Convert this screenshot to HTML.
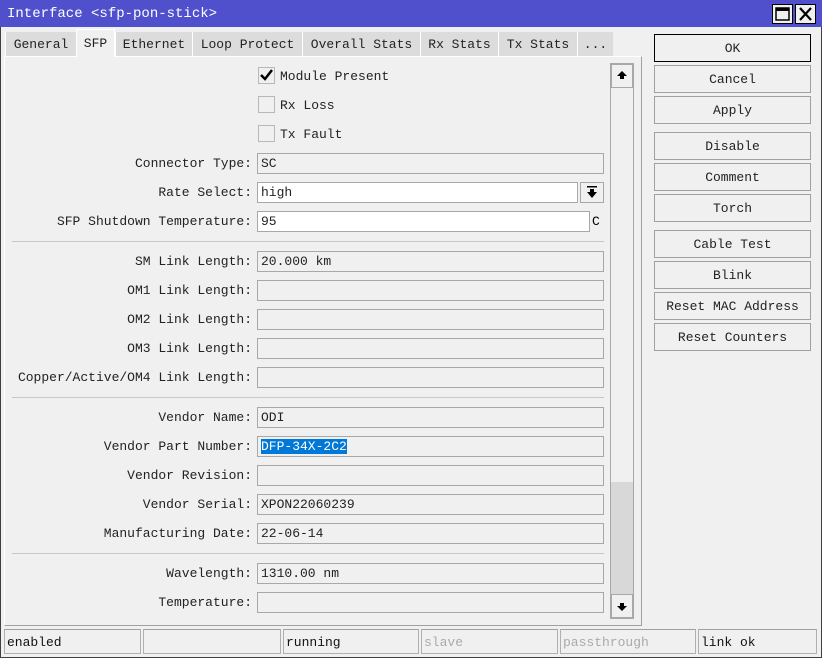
<!DOCTYPE html>
<html><head><meta charset="utf-8"><style>
*{margin:0;padding:0;box-sizing:border-box}
body{width:822px;height:658px;background:#f0f0f0;font-family:"Liberation Mono","Noto Sans CJK SC",monospace;font-size:13px;color:#000;position:relative;overflow:hidden}
.a{position:absolute}
#win{left:0;top:0;width:822px;height:658px;border:1px solid #404040;border-top:none}
#title{left:0;top:0;width:822px;height:27px;background:#5050cc;color:#fff;font-size:14px;padding:6px 0 0 7px}
.tb{top:4px;width:21px;height:20px;background:#f0f0f0;border:1px solid #000}
.tab{top:32px;height:24px;background:#dcdcdc;border-left:1px solid #fff;text-align:center;line-height:26px;color:#222}
.tab.sel{top:29px;height:28px;background:#f0f0f0;border:1px solid #fff;border-bottom:none;line-height:27px}
#panel{left:4px;top:56px;width:638px;height:570px;border:1px solid #fff;border-right-color:#a0a0a0;border-bottom-color:#a0a0a0}
.lbl{right:570px;width:260px;text-align:right;color:#222;margin-top:1px}
.in{left:257px;width:347px;height:21px;border:1px solid #a8a8a8;background:#f0f0f0;padding-left:3px;line-height:20px;color:#222}
.sep{left:12px;width:592px;height:1px;background:#c8c8c8}
.cb{left:258px;width:17px;height:17px;border:1px solid #b8b8b8;background:#f0f0f0}
.cbl{left:280px;color:#222;margin-top:1px}
.btn{left:654px;width:157px;height:28px;border:1px solid #a0a0a0;background:#f0f0f0;text-align:center;line-height:27px;color:#222}
.st{top:629px;height:25px;border:1px solid #b0b0b0;border-top-color:#a0a0a0;padding-left:2px;line-height:25px;color:#111}
</style></head><body>
<div class="a" id="win"></div>
<div class="a" id="title">Interface &lt;sfp-pon-stick&gt;</div>
<div class="a tb" style="left:772px"><svg width="19" height="18" style="position:absolute;left:0;top:0"><rect x="3" y="3" width="13" height="12" fill="none" stroke="#000" stroke-width="1.5"/><rect x="3" y="3" width="13" height="3" fill="#000"/></svg></div>
<div class="a tb" style="left:795px"><svg width="19" height="18" style="position:absolute;left:0;top:0"><path d="M4 3L15 15M15 3L4 15" stroke="#000" stroke-width="2.2"/></svg></div>

<div class="a tab" style="left:5px;width:71px">General</div>
<div class="a tab" style="left:115px;width:77px">Ethernet</div>
<div class="a tab" style="left:192px;width:110px">Loop Protect</div>
<div class="a tab" style="left:302px;width:118px">Overall Stats</div>
<div class="a tab" style="left:420px;width:78px">Rx Stats</div>
<div class="a tab" style="left:498px;width:79px">Tx Stats</div>
<div class="a tab" style="left:577px;width:36px">...</div>
<div class="a" id="panel"></div>
<div class="a tab sel" style="left:76px;width:39px">SFP</div>

<div class="a cb" style="top:67px"><svg width="15" height="15" style="position:absolute;left:0;top:0"><path d="M2 7L6 11L13 2" fill="none" stroke="#000" stroke-width="2.5"/></svg></div><div class="a cbl" style="top:68px">Module Present</div>
<div class="a cb" style="top:96px"></div><div class="a cbl" style="top:97px">Rx Loss</div>
<div class="a cb" style="top:125px"></div><div class="a cbl" style="top:126px">Tx Fault</div>

<div class="a lbl" style="top:155px">Connector Type:</div><div class="a in" style="top:153px">SC</div>
<div class="a lbl" style="top:184px">Rate Select:</div><div class="a in" style="top:182px;width:321px;background:#fff">high</div>
<div class="a" style="left:580px;top:182px;width:24px;height:21px;border:1px solid #a8a8a8"><svg width="22" height="19" style="position:absolute;left:0;top:0"><rect x="6" y="3" width="10" height="1.5" fill="#000"/><path d="M6 9H16L11 15Z" fill="#000"/><rect x="9" y="6" width="4" height="4" fill="#000"/></svg></div>
<div class="a lbl" style="top:213px">SFP Shutdown Temperature:</div><div class="a in" style="top:211px;width:333px;background:#fff">95</div>
<div class="a" style="left:592px;top:214px">C</div>
<div class="a sep" style="top:241px"></div>

<div class="a lbl" style="top:253px">SM Link Length:</div><div class="a in" style="top:251px">20.000 km</div>
<div class="a lbl" style="top:282px">OM1 Link Length:</div><div class="a in" style="top:280px"></div>
<div class="a lbl" style="top:311px">OM2 Link Length:</div><div class="a in" style="top:309px"></div>
<div class="a lbl" style="top:340px">OM3 Link Length:</div><div class="a in" style="top:338px"></div>
<div class="a lbl" style="top:369px">Copper/Active/OM4 Link Length:</div><div class="a in" style="top:367px"></div>
<div class="a sep" style="top:397px"></div>

<div class="a lbl" style="top:409px">Vendor Name:</div><div class="a in" style="top:407px">ODI</div>
<div class="a lbl" style="top:438px">Vendor Part Number:</div><div class="a in" style="top:436px"><span style="background:#0078d7;color:#fff">DFP-34X-2C2</span></div>
<div class="a lbl" style="top:467px">Vendor Revision:</div><div class="a in" style="top:465px"></div>
<div class="a lbl" style="top:496px">Vendor Serial:</div><div class="a in" style="top:494px">XPON22060239</div>
<div class="a lbl" style="top:525px">Manufacturing Date:</div><div class="a in" style="top:523px">22-06-14</div>
<div class="a sep" style="top:553px"></div>
<div class="a lbl" style="top:565px">Wavelength:</div><div class="a in" style="top:563px">1310.00 nm</div>
<div class="a lbl" style="top:594px">Temperature:</div><div class="a in" style="top:592px"></div>

<!-- scrollbar -->
<div class="a" style="left:610px;top:63px;width:24px;height:556px;border:1px solid #a8a8a8;background:#f0f0f0"></div>
<div class="a" style="left:611px;top:482px;width:22px;height:113px;background:#d8d8d8"></div>
<div class="a" style="left:611px;top:64px;width:22px;height:24px;border:1px solid #a8a8a8"><svg width="20" height="22" style="position:absolute;left:0;top:0"><path d="M5 11H15L10 6Z" fill="#000"/><rect x="8" y="10" width="4" height="4" fill="#000"/></svg></div>
<div class="a" style="left:611px;top:594px;width:22px;height:24px;border:1px solid #a8a8a8"><svg width="20" height="22" style="position:absolute;left:0;top:0"><path d="M5 11H15L10 16Z" fill="#000"/><rect x="8" y="8" width="4" height="4" fill="#000"/></svg></div>

<div class="a btn" style="top:34px;border-color:#000">OK</div>
<div class="a btn" style="top:65px">Cancel</div>
<div class="a btn" style="top:96px">Apply</div>
<div class="a btn" style="top:132px">Disable</div>
<div class="a btn" style="top:163px">Comment</div>
<div class="a btn" style="top:194px">Torch</div>
<div class="a btn" style="top:230px">Cable Test</div>
<div class="a btn" style="top:261px">Blink</div>
<div class="a btn" style="top:292px">Reset MAC Address</div>
<div class="a btn" style="top:323px">Reset Counters</div>

<div class="a st" style="left:4px;width:137px">enabled</div>
<div class="a st" style="left:143px;width:138px"></div>
<div class="a st" style="left:283px;width:136px">running</div>
<div class="a st" style="left:421px;width:137px;color:#aaa">slave</div>
<div class="a st" style="left:560px;width:136px;color:#aaa">passthrough</div>
<div class="a st" style="left:698px;width:119px">link ok</div>
</body></html>
